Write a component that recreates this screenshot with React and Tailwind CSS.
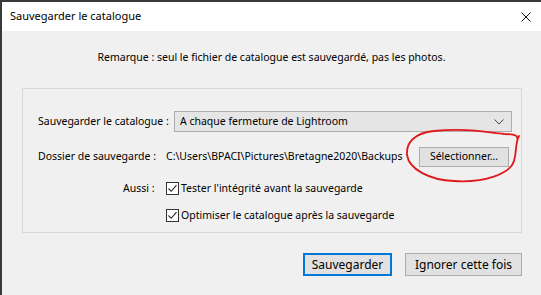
function Check() {
  return (
    <span className="w-[13px] h-[13px] border border-[#333] bg-white flex items-center justify-center shrink-0">
      <svg width="11" height="11" viewBox="0 0 11 11">
        <path d="M1.5 5.5 L4.2 8.3 L9.5 2.2" fill="none" stroke="#222" strokeWidth="1.1" />
      </svg>
    </span>
  );
}

export default function App() {
  return (
    <div
      className="w-[541px] h-[295px] bg-[#3a3a3a] pt-[2px] pl-[2px] overflow-hidden text-[10.5px] text-black"
      style={{ fontFamily: '"Noto Sans", "Liberation Sans", sans-serif' }}
    >
      <div className="w-full h-full bg-[#f0f0f0] flex flex-col">
        {/* title bar */}
        <div className="h-[29px] bg-white flex items-center justify-between pl-[8px] pr-[10px] shrink-0">
          <span className="text-[11px]">Sauvegarder le catalogue</span>
          <svg width="10" height="10" viewBox="0 0 10 10">
            <path d="M0.5 0.5 L9.5 9.5 M9.5 0.5 L0.5 9.5" stroke="#111" strokeWidth="1" />
          </svg>
        </div>

        <div className="h-[20px] mt-[17px] flex items-center justify-center">
          Remarque : seul le fichier de catalogue est sauvegardé, pas les photos.
        </div>

        {/* group box */}
        <div className="relative ml-[20px] w-[500px] mt-[20px] h-[145px] border border-[#d8d8d8] pt-[22px] pl-[15px] shrink-0">
          <div className="flex items-center h-[21px]">
            <span className="w-[136px] whitespace-nowrap shrink-0">Sauvegarder le catalogue :</span>
            <div className="w-[338px] h-[21px] border border-[#adadad] bg-[#e5e5e5] flex items-center justify-between pl-[5px] pr-[7px] shrink-0">
              <span className="whitespace-nowrap">A chaque fermeture de Lightroom</span>
              <svg width="10" height="6" viewBox="0 0 10 6">
                <path d="M0.5 0.5 L5 5 L9.5 0.5" fill="none" stroke="#444" strokeWidth="1" />
              </svg>
            </div>
          </div>

          <div className="flex items-center h-[20px] mt-[15px]">
            <span className="w-[128px] whitespace-nowrap shrink-0">Dossier de sauvegarde :</span>
            <span className="w-[253px] whitespace-nowrap shrink-0">C:\Users\BPACI\Pictures\Bretagne2020\Backups</span>
            <button className="w-[90px] h-[20px] border border-[#adadad] bg-[#e1e1e1] flex items-center justify-center shrink-0">
              Sélectionner...
            </button>
          </div>

          <div className="flex items-center h-[13px] mt-[15px]">
            <span className="w-[128px] pl-[85px] whitespace-nowrap shrink-0">Aussi :</span>
            <Check />
            <span className="ml-[2px] whitespace-nowrap">Tester l'intégrité avant la sauvegarde</span>
          </div>

          <div className="flex items-center h-[13px] mt-[14px] pl-[128px]">
            <Check />
            <span className="ml-[2px] whitespace-nowrap">Optimiser le catalogue après la sauvegarde</span>
          </div>

          {/* red hand-drawn circle */}
          <svg className="absolute left-[381px] top-[38px]" width="120" height="58" viewBox="0 0 120 58">
            <path
              d="M113 11 C114 8 108 7 100 7 C80 5 60 1 30 4 C10 6 2 16 3 28 C5 42 25 53 50 54 C80 56 106 47 110 34 C113 24 111 16 115 9"
              fill="none"
              stroke="#e0191c"
              strokeWidth="1.8"
              strokeLinecap="round"
            />
          </svg>
        </div>

        {/* buttons */}
        <div className="flex justify-end gap-[13px] pr-[19px] mt-[20px]">
          <button className="w-[89px] h-[23px] border-2 border-[#0078d7] bg-[#e1e1e1] text-[12px] flex items-center justify-center">
            Sauvegarder
          </button>
          <button className="w-[117px] h-[23px] border border-[#adadad] bg-[#e1e1e1] text-[12px] flex items-center justify-center">
            Ignorer cette fois
          </button>
        </div>
      </div>
    </div>
  );
}
